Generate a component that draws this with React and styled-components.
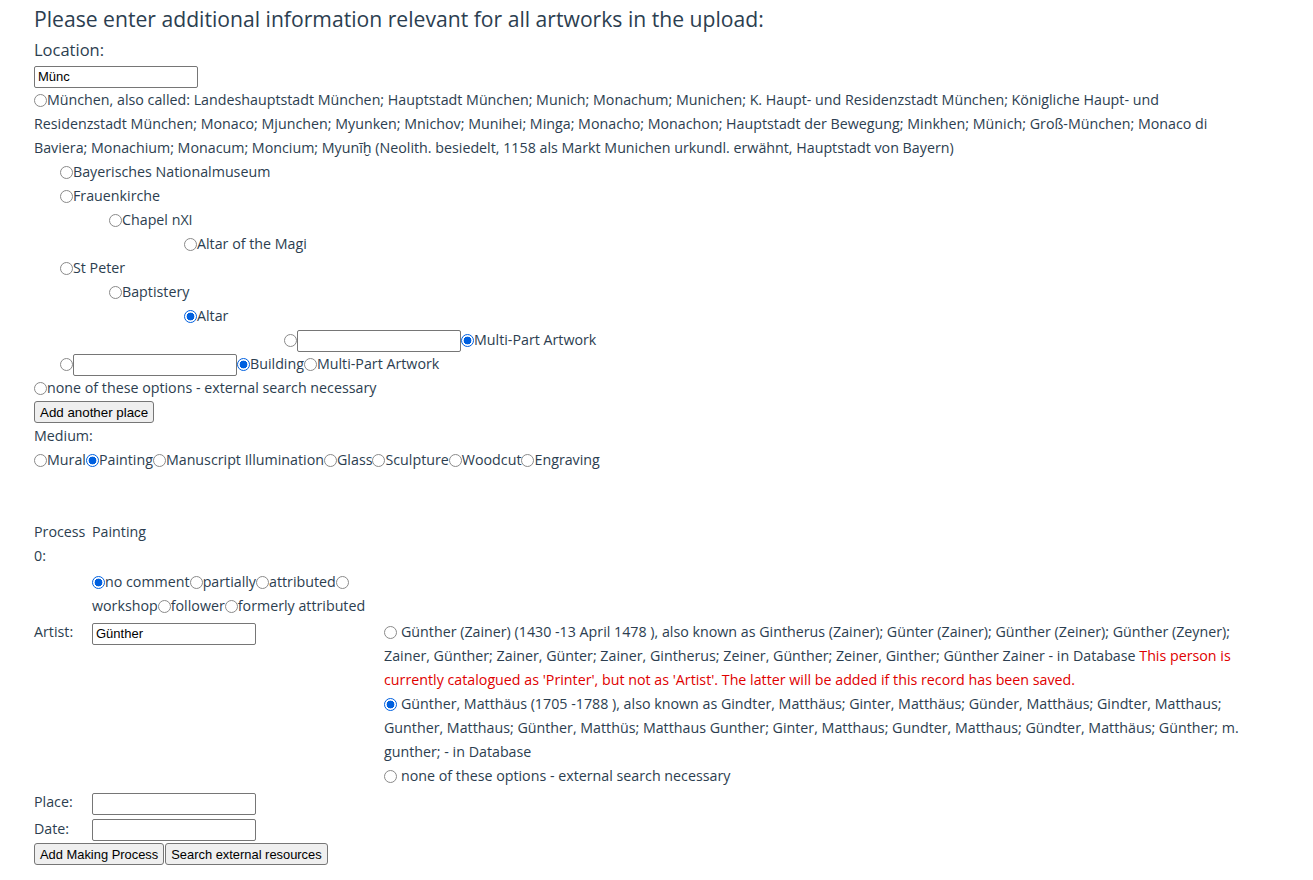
import React from 'react';
import styled, { createGlobalStyle } from 'styled-components';

const GlobalStyle = createGlobalStyle`
    body {
        margin: 0;
        background: #fff;
        color: #2c3e50;
        font-family: "Open Sans", "Noto Sans", sans-serif;
        font-size: 14.25px;
        line-height: 24px;
    }
`

const Page = styled.div`
    padding: 4px 0 20px 34px;
    width: 1210px;
`

const Title = styled.h3`
    margin: 0;
    font-size: 21.15px;
    font-weight: 400;
    line-height: 30px;
`

const BigLabel = styled.div`
    font-size: 16.5px;
    line-height: 24px;
    margin-top: 4px;
`

const Label = styled.div`
    line-height: 24px;
    margin-top: ${(p) => p.$top || 0}px;
`

const TextInput = styled.input`
    box-sizing: border-box;
    width: 164px;
    height: 22px;
    margin: 0;
    padding: 1px 3px;
    border: 1px solid #767676;
    border-radius: 2px;
    font-family: "Liberation Sans", Arial, sans-serif;
    font-size: 13px;
    color: #000;
    vertical-align: middle;
    margin-top: ${(p) => (p.$top ? p.$top : 0)}px;
`

const Radio = styled.input.attrs({ type: 'radio' })`
    appearance: none;
    box-sizing: border-box;
    width: 13px;
    height: 13px;
    margin: 0 ${(p) => (p.$gap ? 4 : 0)}px 0 0;
    border: 1px solid #8a8a8a;
    border-radius: 50%;
    background: #fff;
    vertical-align: -2px;

    &:checked {
        border-color: #0060df;
        background: radial-gradient(circle, #0060df 0 3.6px, #fff 4.2px);
    }
`

const TreeLine = styled.div`
    padding-left: ${(p) => p.$indent}px;
    line-height: 24px;
`

const Button = styled.button`
    box-sizing: border-box;
    height: 22px;
    margin: 0;
    padding: 1px 5px;
    background: #efefef;
    border: 1px solid #767676;
    border-radius: 3px;
    color: #000;
    font-family: "Liberation Sans", Arial, sans-serif;
    font-size: ${(p) => p.$size || 13.33}px;
`

const ButtonRow = styled.div`
    display: flex;
    gap: 1px;
    margin-top: ${(p) => p.$top || 0}px;
`

const Choices = styled.div`
    line-height: 24px;
`

const ProcessGrid = styled.div`
    display: grid;
    grid-template-columns: 54px 288px 1fr;
    column-gap: 4px;
    row-gap: 2px;
    margin-top: 48px;
    align-items: start;
`

const Cell = styled.div`
    line-height: 24px;
    grid-column: ${(p) => p.$col || 'auto'};
`

const Warning = styled.span`
    color: #e00000;
`

const indents = [0, 26, 75, 150, 250];

const tree = [
    { level: 1, text: 'Bayerisches Nationalmuseum' },
    { level: 1, text: 'Frauenkirche' },
    { level: 2, text: 'Chapel nXI' },
    { level: 3, text: 'Altar of the Magi' },
    { level: 1, text: 'St Peter' },
    { level: 2, text: 'Baptistery' },
    { level: 3, text: 'Altar', checked: true },
];

const media = ['Mural', 'Painting', 'Manuscript Illumination', 'Glass', 'Sculpture', 'Woodcut', 'Engraving'];

const App = () => (
    <Page>
        <GlobalStyle />
        <Title>Please enter additional information relevant for all artworks in the upload:</Title>
        <BigLabel>Location:</BigLabel>
        <TextInput defaultValue="Münc" $top={3} />
        <TreeLine $indent={0}>
            <Radio name="loc" />München, also called: Landeshauptstadt München; Hauptstadt München; Munich; Monachum; Munichen; K. Haupt- und Residenzstadt München; Königliche Haupt- und Residenzstadt München; Monaco; Mjunchen; Myunken; Mnichov; Munihei; Minga; Monacho; Monachon; Hauptstadt der Bewegung; Minkhen; Münich; Groß-München; Monaco di Baviera; Monachium; Monacum; Moncium; Myunīḫ (Neolith. besiedelt, 1158 als Markt Munichen urkundl. erwähnt, Hauptstadt von Bayern)
        </TreeLine>
        {tree.map((item) => (
            <TreeLine key={item.text} $indent={indents[item.level]}>
                <Radio name="loc" defaultChecked={item.checked} />{item.text}
            </TreeLine>
        ))}
        <TreeLine $indent={indents[4]}>
            <Radio name="loc" /><TextInput /><Radio name="type4" defaultChecked />Multi-Part Artwork
        </TreeLine>
        <TreeLine $indent={indents[1]}>
            <Radio name="loc" /><TextInput /><Radio name="type1" defaultChecked />Building<Radio name="type1" />Multi-Part Artwork
        </TreeLine>
        <TreeLine $indent={0}>
            <Radio name="loc" />none of these options - external search necessary
        </TreeLine>
        <ButtonRow $top={1}>
            <Button>Add another place</Button>
        </ButtonRow>
        <Label $top={1}>Medium:</Label>
        <Choices>
            {media.map((m) => (
                <React.Fragment key={m}>
                    <Radio name="medium" defaultChecked={m === 'Painting'} />{m}
                </React.Fragment>
            ))}
        </Choices>
        <ProcessGrid>
            <Cell>Process 0:</Cell>
            <Cell>Painting</Cell>
            <Cell />
            <Cell $col="2">
                <Radio name="attr" defaultChecked />no comment<Radio name="attr" />partially<Radio name="attr" />attributed<Radio name="attr" /> workshop<Radio name="attr" />follower<Radio name="attr" />formerly attributed
            </Cell>
            <Cell $col="1">Artist:</Cell>
            <Cell><TextInput defaultValue="Günther" $top={1} /></Cell>
            <Cell>
                <div>
                    <Radio name="artist" $gap />Günther (Zainer) (1430 -13 April 1478 ), also known as Gintherus (Zainer); Günter (Zainer); Günther (Zeiner); Günther (Zeyner); Zainer, Günther; Zainer, Günter; Zainer, Gintherus; Zeiner, Günther; Zeiner, Ginther; Günther Zainer - in Database <Warning>This person is currently catalogued as 'Printer', but not as 'Artist'. The latter will be added if this record has been saved.</Warning>
                </div>
                <div>
                    <Radio name="artist" $gap defaultChecked />Günther, Matthäus (1705 -1788 ), also known as Gindter, Matthäus; Ginter, Matthäus; Günder, Matthäus; Gindter, Matthaus; Gunther, Matthaus; Günther, Matthüs; Matthaus Gunther; Ginter, Matthaus; Gundter, Matthaus; Gündter, Matthäus; Günther; m. gunther; - in Database
                </div>
                <div>
                    <Radio name="artist" $gap />none of these options - external search necessary
                </div>
            </Cell>
            <Cell $col="1">Place:</Cell>
            <Cell><TextInput $top={1} /></Cell>
            <Cell />
            <Cell $col="1">Date:</Cell>
            <Cell><TextInput $top={1} /></Cell>
            <Cell />
        </ProcessGrid>
        <ButtonRow $top={2}>
            <Button $size={12.9}>Add Making Process</Button>
            <Button $size={12.9}>Search external resources</Button>
        </ButtonRow>
    </Page>
);

export default App;
